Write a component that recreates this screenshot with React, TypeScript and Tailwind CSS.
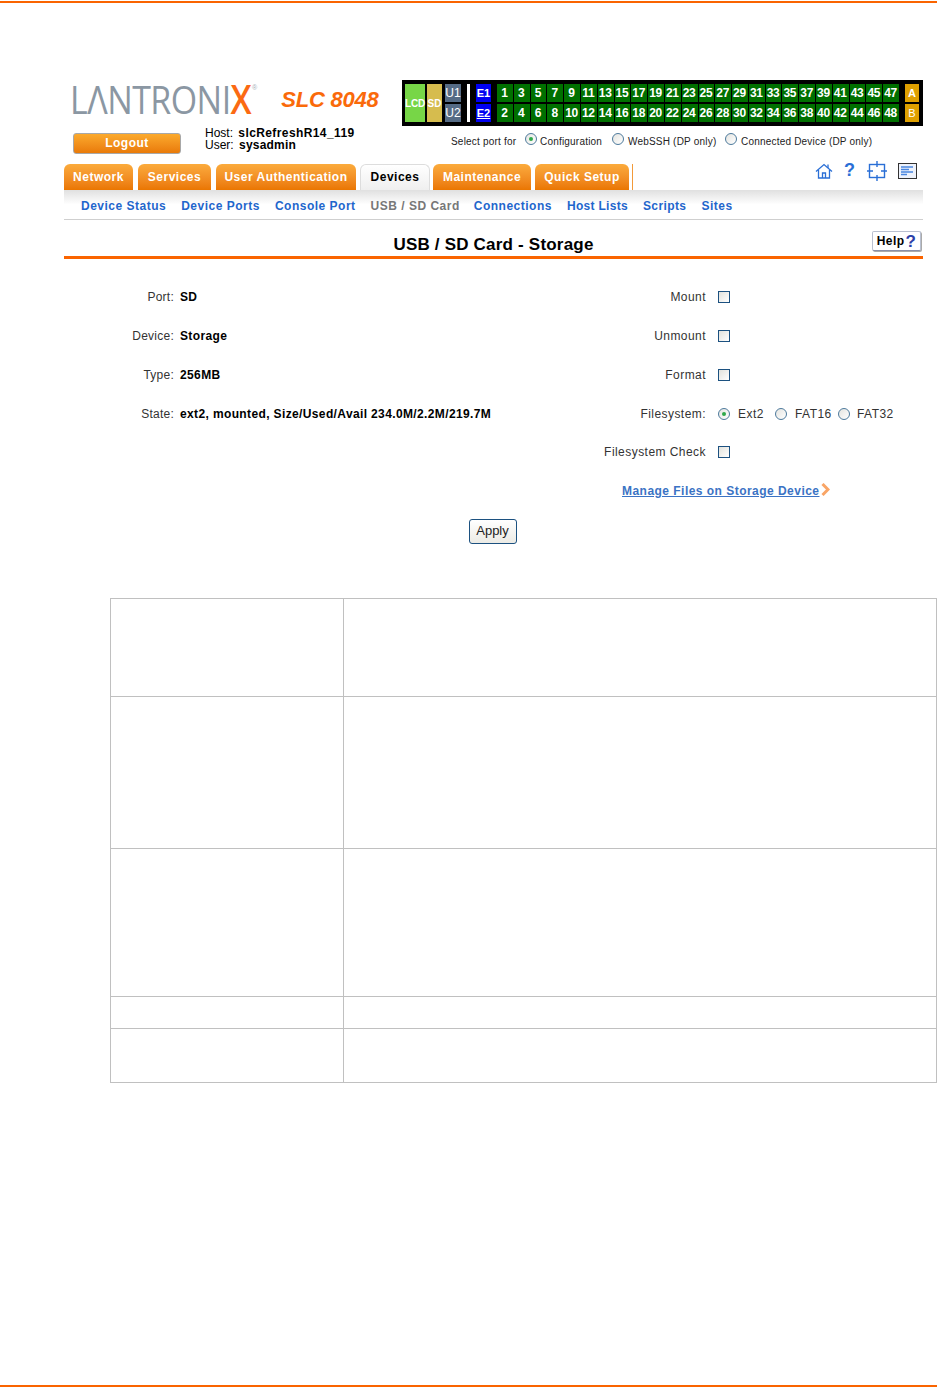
const TABS = [
  { label: "Network", cls: "w-[69px]" },
  { label: "Services", cls: "w-[73px] ml-[5px]" },
  { label: "User Authentication", cls: "w-[140px] ml-[5px]" },
  { label: "Devices", cls: "w-[70px] ml-[4px]", active: true },
  { label: "Maintenance", cls: "w-[98px] ml-[3px]" },
  { label: "Quick Setup", cls: "w-[94px] ml-[4px]" },
];

const SUBNAV = [
  { label: "Device Status", cls: "" },
  { label: "Device Ports", cls: "" },
  { label: "Console Port", cls: "" },
  { label: "USB / SD Card", cls: "text-[#777]" },
  { label: "Connections", cls: "ml-[-1px]" },
  { label: "Host Lists", cls: "tracking-[0.3px]" },
  { label: "Scripts", cls: "tracking-[0.4px]" },
  { label: "Sites", cls: "" },
];

const ODD_PORTS = Array.from({ length: 24 }, (_, i) => i * 2 + 1);
const EVEN_PORTS = Array.from({ length: 24 }, (_, i) => i * 2 + 2);

const INFO_ROWS = [
  { label: "Port:", value: "SD" },
  { label: "Device:", value: "Storage" },
  { label: "Type:", value: "256MB" },
  { label: "State:", value: "ext2, mounted, Size/Used/Avail 234.0M/2.2M/219.7M" },
];

const TABLE_ROWS = ["h-[98px]", "h-[152px]", "h-[148px]", "h-[32px]", "h-[54px]"];

function Radio({ checked, className = "" }: { checked?: boolean; className?: string }) {
  return (
    <span
      className={`flex h-[12px] w-[12px] flex-none items-center justify-center rounded-full border border-[#4d7a9c] bg-gradient-to-br from-[#e4e4e0] to-white ${className}`}
    >
      {checked && <span className="h-[4px] w-[4px] rounded-full bg-[#2fa84a]" />}
    </span>
  );
}

function Checkbox() {
  return (
    <span className="block h-[12px] w-[12px] border border-[#1c5180] bg-gradient-to-br from-[#e2e2dc] to-white" />
  );
}

function PortCell({ label, className = "" }: { label: string | number; className?: string }) {
  return (
    <span
      className={`flex h-[18px] items-center justify-center text-[12px] font-bold text-white ${className}`}
    >
      {label}
    </span>
  );
}

function PortPanel() {
  return (
    <div className="flex h-[46px] w-[521px] bg-black py-[4px] pl-[3px]">
      <span className="flex w-[20px] items-center justify-center bg-[#77d647] text-[10px] font-bold tracking-[-0.2px] text-white">
        LCD
      </span>
      <span className="ml-[2px] flex w-[15px] items-center justify-center bg-[#d6bc4e] text-[10px] font-bold text-white">
        SD
      </span>
      <div className="ml-[3px] flex w-[16px] flex-col justify-between">
        <PortCell label="U1" className="bg-[#556b85] !font-normal" />
        <PortCell label="U2" className="bg-[#556b85] !font-normal" />
      </div>
      <span className="ml-[6px] w-[3px] bg-white" />
      <div className="ml-[6px] flex w-[15px] flex-col justify-between">
        <PortCell label="E1" className="bg-[#0000f0] !text-[11px]" />
        <PortCell label="E2" className="bg-[#0000f0] !text-[11px] underline" />
      </div>
      <div className="ml-[6px] flex w-[402px] flex-col justify-between">
        <div className="grid grid-cols-[repeat(24,1fr)] gap-x-[1px]">
          {ODD_PORTS.map((n) => (
            <PortCell key={n} label={n} className="bg-[#007000] pr-[1px] tracking-[-0.3px]" />
          ))}
        </div>
        <div className="grid grid-cols-[repeat(24,1fr)] gap-x-[1px]">
          {EVEN_PORTS.map((n) => (
            <PortCell key={n} label={n} className="bg-[#007000] pr-[1px] tracking-[-0.3px]" />
          ))}
        </div>
      </div>
      <div className="ml-[6px] flex w-[14px] flex-col justify-between">
        <PortCell label="A" className="bg-[#dfa000] !text-[11px]" />
        <PortCell label="B" className="bg-[#dfa000] !font-normal !text-[11px]" />
      </div>
    </div>
  );
}

function ToolIcons() {
  return (
    <div className="ml-auto mr-[6px] flex items-start text-[#2a6fd6]">
      <svg width="18" height="18" viewBox="0 0 18 18" fill="none" stroke="currentColor" strokeWidth="1.3" className="mr-[11px] mt-[-2px]">
        <path d="M1 9.5 9 2.5l8 7" />
        <path d="M3.5 8v8h11V8" />
        <path d="M7.5 16v-5h3v5" />
        <path d="M13 2.5V6" />
      </svg>
      <span className="mr-[12px] mt-[-4px] text-[18px] font-bold leading-[20px]">?</span>
      <svg width="20" height="20" viewBox="0 0 20 20" fill="none" stroke="currentColor" strokeWidth="1.4" className="mr-[11px] mt-[-3px]">
        <rect x="2.5" y="3.5" width="15" height="13" />
        <path d="M10 0v6M10 14v6M0 10h6M14 10h6" />
      </svg>
      <svg width="19" height="16" viewBox="0 0 19 16" className="mt-[-1px]">
        <rect x="0.5" y="0.5" width="18" height="15" fill="#eef2fb" stroke="#333" />
        <path d="M3 4h12M3 6.5h8M3 9h12M3 11.5h6" stroke="#4a86e0" strokeWidth="1.4" />
      </svg>
    </div>
  );
}

export default function App() {
  return (
    <div className="flex h-[1388px] w-[937px] flex-col overflow-hidden bg-white pt-[1px] pb-[1px] font-['Liberation_Sans',Arial,sans-serif] text-[12px] text-black">
      <div className="h-[2px] bg-[#fa6400]" />

      <div className="ml-[64px] mt-[77px] w-[859px]">
        {/* Header */}
        <div className="flex h-[84px]">
          <div className="w-[338px]">
            <div className="flex h-[40px] items-center whitespace-nowrap pl-[6px]">
              <span className="mb-[4px] block w-[180px] origin-left scale-x-[0.87] font-['Open_Sans',sans-serif] text-[39px] font-normal leading-none tracking-[-0.6px] text-[#8b97a3]">
                LΛNTRONI<span className="font-semibold text-[#fb6a12]">X</span>
              </span>
              <span className="mb-[24px] ml-[2px] text-[7px] text-[#a8b0b8]">®</span>
              <span className="ml-[24px] text-[22px] font-bold italic leading-none tracking-[-0.2px] text-[#fa6a0a]">
                SLC 8048
              </span>
            </div>
            <div className="mt-[13px] flex">
              <button className="ml-[9px] h-[21px] w-[108px] rounded-[3px] border border-[#a8a8a8] bg-gradient-to-b from-[#fbaa2c] to-[#e97a08] pb-[4px] text-[12px] font-bold tracking-[0.5px] text-white">
                Logout
              </button>
              <div className="ml-[24px] mt-[-6px] text-[12px] leading-[12px]">
                <div>
                  Host: <span className="ml-[2px] font-bold tracking-[0.4px]">slcRefreshR14_119</span>
                </div>
                <div>
                  User: <span className="ml-[2px] font-bold tracking-[0.2px]">sysadmin</span>
                </div>
              </div>
            </div>
          </div>
          <div>
            <PortPanel />
            <div className="mt-[7px] flex items-start text-[10px] leading-[12px] tracking-[0.2px] text-[#222]">
              <span className="ml-[49px] mt-[3px] w-[74px]">Select port for</span>
              <Radio checked />
              <span className="ml-[3px] mt-[3px] w-[72px]">Configuration</span>
              <Radio />
              <span className="ml-[4px] mt-[3px] w-[97px]">WebSSH (DP only)</span>
              <Radio />
              <span className="ml-[4px] mt-[3px]">Connected Device (DP only)</span>
            </div>
          </div>
        </div>

        {/* Tabs */}
        <div className="flex h-[26px] items-stretch">
          {TABS.map((tab) => (
            <div
              key={tab.label}
              className={`flex items-center justify-center rounded-t-[6px] text-[12px] font-bold tracking-[0.5px] ${tab.cls} ${
                tab.active
                  ? "border border-b-0 border-[#ddd] bg-gradient-to-b from-white to-[#efefef] pb-[2px] text-black"
                  : "bg-gradient-to-b from-[#fbab3c] to-[#ea7600] text-white"
              }`}
            >
              {tab.label}
            </div>
          ))}
          <span className="ml-[3px] w-[1px] bg-[#f29a3a]" />
          <ToolIcons />
        </div>

        {/* Sub navigation */}
        <div className="flex h-[30px] items-center gap-x-[15px] border-b border-[#cfcfcf] bg-gradient-to-b from-[#e0e0e0] via-white to-white pl-[17px] pt-[2px] text-[12px] font-bold tracking-[0.5px] text-[#1f66cc]">
          {SUBNAV.map((item) => (
            <span key={item.label} className={item.cls}>
              {item.label}
            </span>
          ))}
        </div>

        {/* Title */}
        <div className="relative flex h-[39px] items-center justify-center border-b-[3px] border-[#fa6400] pt-[14px] text-[17px] font-bold tracking-[0.2px]">
          USB / SD Card - Storage
          <span className="absolute right-[2px] top-[11px] flex h-[20px] w-[49px] items-center justify-center rounded-[2px] border border-[#b9c0d0] border-b-[#8a8fa8] bg-white text-[12px] font-bold tracking-[0.4px] shadow-[1px_1px_0_#aaa]">
            Help<span className="ml-[1px] text-[17px] leading-none text-[#2c3fa8]">?</span>
          </span>
        </div>

        {/* Form */}
        <div className="mt-[19px] flex">
          <div className="w-[510px] tracking-[0.25px]">
            {INFO_ROWS.map((row) => (
              <div key={row.label} className="flex h-[38.75px] items-center">
                <span className="w-[110px] text-right text-[#333]">{row.label}</span>
                <span className="ml-[6px] whitespace-nowrap font-bold tracking-[0.37px]">{row.value}</span>
              </div>
            ))}
          </div>
          <div className="flex-1 tracking-[0.45px]">
            <div className="flex h-[38.75px] items-center">
              <span className="w-[132px] text-right text-[#333]">Mount</span>
              <span className="ml-[12px]"><Checkbox /></span>
            </div>
            <div className="flex h-[38.75px] items-center">
              <span className="w-[132px] text-right text-[#333]">Unmount</span>
              <span className="ml-[12px]"><Checkbox /></span>
            </div>
            <div className="flex h-[38.75px] items-center">
              <span className="w-[132px] text-right text-[#333]">Format</span>
              <span className="ml-[12px]"><Checkbox /></span>
            </div>
            <div className="flex h-[38.75px] items-center whitespace-nowrap text-[#333]">
              <span className="w-[132px] text-right">Filesystem:</span>
              <Radio checked className="ml-[12px]" />
              <span className="ml-[8px] w-[37px]">Ext2</span>
              <Radio />
              <span className="ml-[8px] w-[43px]">FAT16</span>
              <Radio />
              <span className="ml-[7px]">FAT32</span>
            </div>
            <div className="flex h-[38.75px] items-center">
              <span className="w-[132px] whitespace-nowrap text-right text-[#333]">Filesystem Check</span>
              <span className="ml-[12px]"><Checkbox /></span>
            </div>
            <div className="flex h-[38.75px] items-center pl-[48px] font-bold tracking-[0.47px] text-[#3b73c4]">
              <span className="whitespace-nowrap underline">Manage Files on Storage Device</span>
              <svg width="9" height="13" viewBox="0 0 9 13" fill="none" stroke="#f9a566" strokeWidth="3" className="ml-[1px] mb-[3px]">
                <path d="M1.5 1 7 6.5 1.5 12" />
              </svg>
            </div>
          </div>
        </div>

        <div className="mt-[8px] flex justify-center pr-[2px]">
          <button className="h-[25px] w-[48px] rounded-[3px] border border-[#1c5180] bg-gradient-to-b from-white to-[#ecebe5] text-[13px] text-[#222]">
            Apply
          </button>
        </div>
      </div>

      {/* Parameter table */}
      <table className="ml-[110px] mt-[54px] w-[827px] table-fixed border-collapse">
        <tbody>
          {TABLE_ROWS.map((h) => (
            <tr key={h} className={h}>
              <td className="w-[233px] border border-[#c0c0c0]" />
              <td className="border border-[#c0c0c0]" />
            </tr>
          ))}
        </tbody>
      </table>

      <div className="mt-auto h-[2px] bg-[#fa6400]" />
    </div>
  );
}
